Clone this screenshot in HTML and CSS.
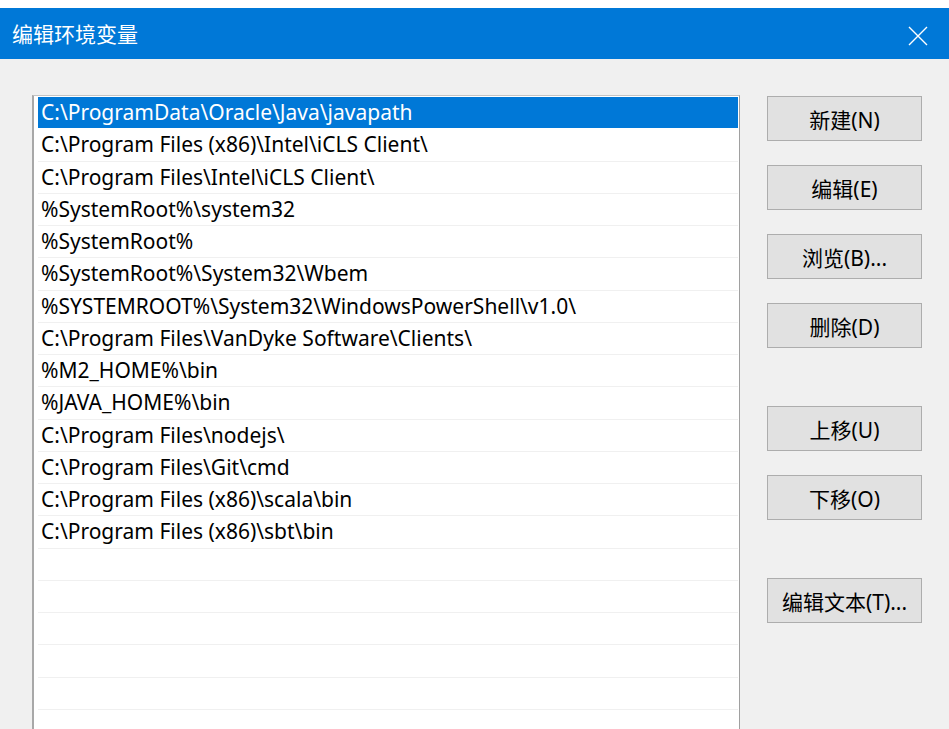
FILE: index.html
```html
<!DOCTYPE html>
<html lang="zh-CN">
<head>
<meta charset="utf-8">
<title>编辑环境变量</title>
<link rel="stylesheet" href="styles.css">
</head>
<body>
<div class="window">
  <div class="topstrip"></div>
  <header class="titlebar">
    <span class="title">编辑环境变量</span>
    <span class="close" aria-label="关闭">
      <svg width="20" height="20" viewBox="0 0 20 20"><path d="M1 1 L19 19 M19 1 L1 19" stroke="#fff" stroke-width="1.4" fill="none"/></svg>
    </span>
  </header>
  <main class="content">
    <div class="listbox">
      <div class="row selected">C:\ProgramData\Oracle\Java\javapath</div>
      <div class="row">C:\Program Files (x86)\Intel\iCLS Client\</div>
      <div class="row">C:\Program Files\Intel\iCLS Client\</div>
      <div class="row">%SystemRoot%\system32</div>
      <div class="row">%SystemRoot%</div>
      <div class="row">%SystemRoot%\System32\Wbem</div>
      <div class="row">%SYSTEMROOT%\System32\WindowsPowerShell\v1.0\</div>
      <div class="row">C:\Program Files\VanDyke Software\Clients\</div>
      <div class="row">%M2_HOME%\bin</div>
      <div class="row">%JAVA_HOME%\bin</div>
      <div class="row">C:\Program Files\nodejs\</div>
      <div class="row">C:\Program Files\Git\cmd</div>
      <div class="row">C:\Program Files (x86)\scala\bin</div>
      <div class="row">C:\Program Files (x86)\sbt\bin</div>
      <div class="row"></div>
      <div class="row"></div>
      <div class="row"></div>
      <div class="row"></div>
      <div class="row"></div>
      <div class="row"></div>
    </div>
    <div class="buttons">
      <button class="btn">新建(N)</button>
      <button class="btn">编辑(E)</button>
      <button class="btn">浏览(B)...</button>
      <button class="btn">删除(D)</button>
      <button class="btn spaced">上移(U)</button>
      <button class="btn">下移(O)</button>
      <button class="btn spaced">编辑文本(T)...</button>
    </div>
  </main>
</div>
</body>
</html>
```
FILE: styles.css
```css
html, body {
  margin: 0;
  padding: 0;
}
body {
  width: 949px;
  height: 729px;
  overflow: hidden;
  background: #f0f0f0;
  font-family: "Noto Sans", "Noto Sans CJK SC", sans-serif;
  color: #000;
}
.window {
  display: flex;
  flex-direction: column;
  height: 729px;
  overflow: hidden;
}
.topstrip {
  flex-shrink: 0;
  height: 8px;
  background: #fff;
}
.titlebar {
  flex-shrink: 0;
  height: 51px;
  background: #0078d7;
  display: flex;
  align-items: center;
  justify-content: space-between;
  padding: 0 21px 0 12px;
  color: #fff;
}
.title {
  font-family: "Noto Sans CJK SC", sans-serif;
  font-size: 21px;
  margin-top: -1px;
}
.close {
  display: flex;
  margin-top: 4px;
}
.content {
  flex: 1;
  min-height: 0;
  display: flex;
  align-items: flex-start;
  gap: 27px;
  padding: 36px 0 0 32px;
}
.listbox {
  flex-shrink: 0;
  width: 708px;
  height: 634px;
  overflow: hidden;
  box-sizing: border-box;
  background: #fff;
  border-top: 1px solid #c4c4c4;
  border-right: 1px solid #a0a0a0;
  border-left: 2px solid #a8a8a8;
  padding: 1px 1px 0 2px;
}
.row {
  height: 32.25px;
  box-sizing: border-box;
  border-bottom: 1px solid #f0f0f0;
  padding-left: 3px;
  font-size: 21px;
  line-height: 31px;
  white-space: nowrap;
  margin-left: 2px;
}
.row.selected {
  background: #0078d7;
  color: #fff;
  border-bottom-color: #fff;
}
.buttons {
  flex-shrink: 0;
  display: flex;
  flex-direction: column;
  gap: 24px;
  margin-top: 1px;
  width: 155px;
}
.btn {
  height: 45px;
  width: 155px;
  background: #e1e1e1;
  border: 1px solid #adadad;
  font-family: "Noto Sans", "Noto Sans CJK SC", sans-serif;
  font-size: 21px;
  color: #000;
  padding: 0;
}
.btn.spaced {
  margin-top: 34px;
}
```
